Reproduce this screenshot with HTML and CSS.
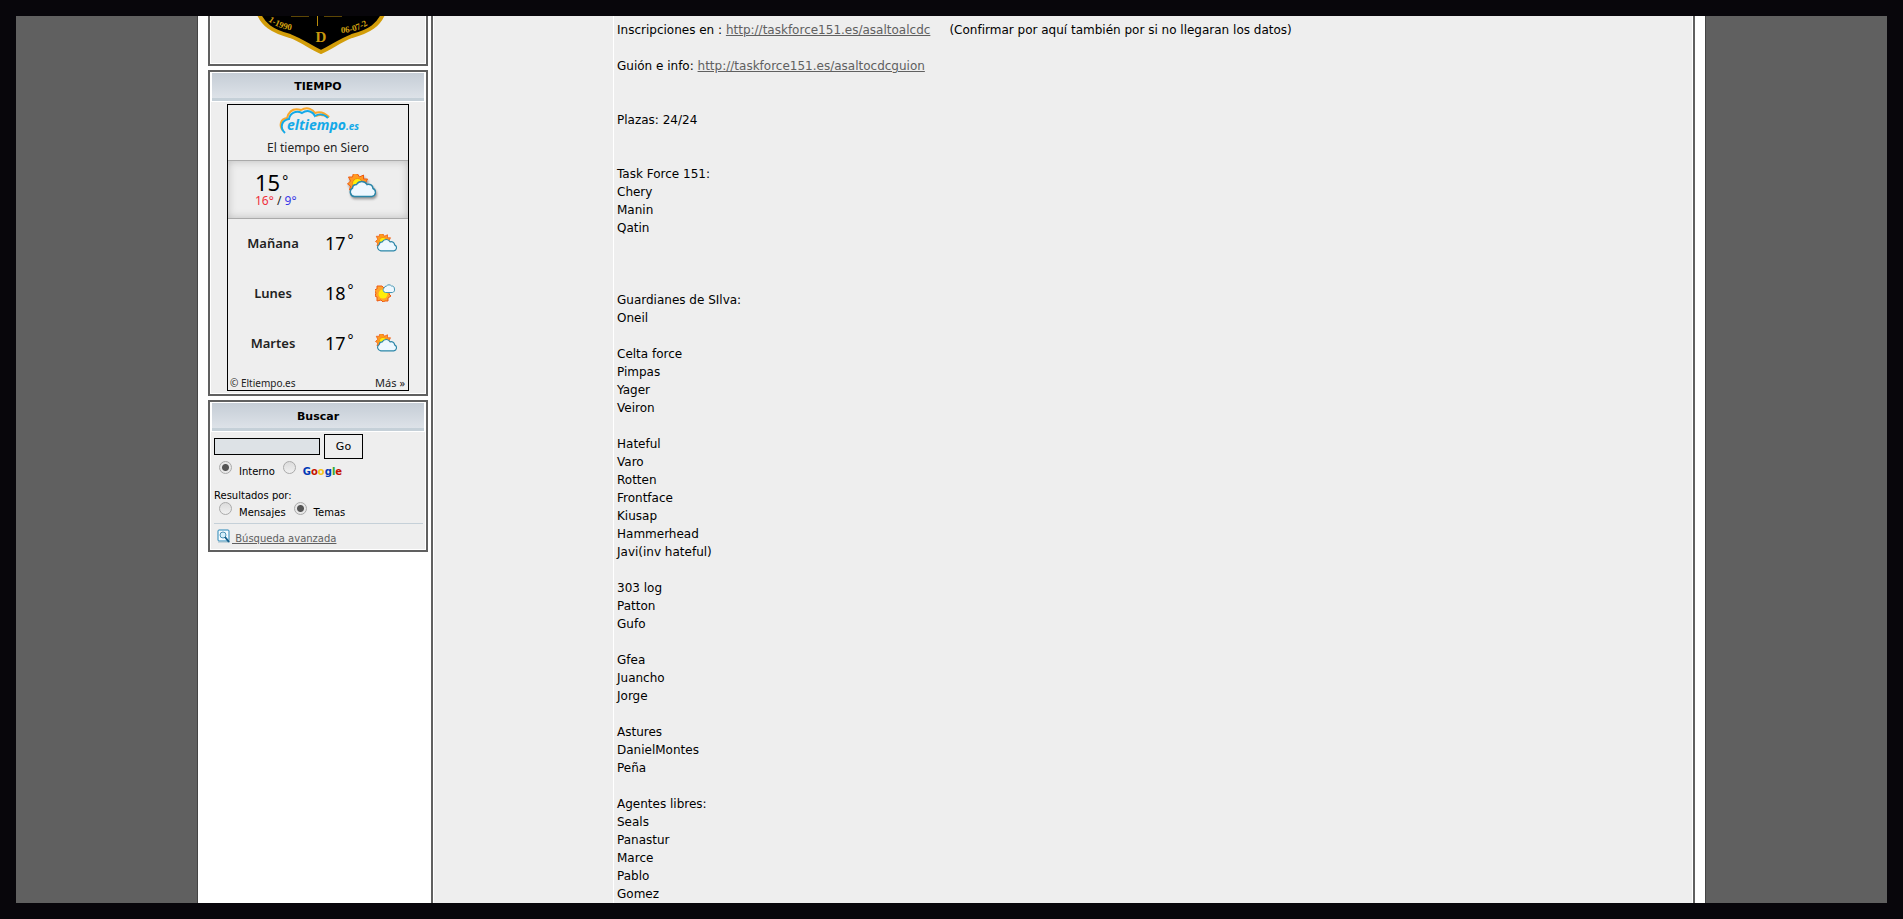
FILE: index.html
```html
<!DOCTYPE html>
<html lang="es">
<head>
<meta charset="utf-8">
<title>Asalto al CDC</title>
<link rel="stylesheet" href="styles.css">
</head>
<body>
<svg class="defs" aria-hidden="true">
  <symbol id="sun-cloud" viewBox="0 0 28 24">
    <path d="M10 0l2 3 4-2 0 4 4 0-2 4 2 4-9 4-3 2-2-3-4 0 1-4-3-2 3-3-2-4 4 0 1-4z" fill="#ff9a22" stroke="#ee5a12" stroke-width="1"/>
    <circle cx="10" cy="9.500" r="5" fill="#ffee08" stroke="#f08a10"/>
    <path d="M7 22.500a4.600 4.600 0 0 1-2-8.500 4 4 0 0 1 4-3.500 6 6 0 0 1 10.500 0 4.500 4.500 0 0 1 6 4 4.200 4.200 0 0 1-1 8z" fill="#eef8ff" stroke="#2b86a8" stroke-width="1.500"/>
  </symbol>
  <symbol id="sun-small-cloud" viewBox="0 0 20 18">
    <path d="M7 2l2 2 3-1 0 3 3 1-1 3 2 2-3 2 0 3-3 0-2 1-2-2-4 1 0-4-2-1 1-3-2-3 3-1 0-3 3 0z" fill="#ffa32c" stroke="#ee5a12" stroke-width="1"/>
    <circle cx="8" cy="10" r="4.500" fill="#ffee08"/>
    <path d="M10.500 8.500a2.600 2.600 0 0 1-1.500-4.500 3 3 0 0 1 2.500-2 3.200 3.200 0 0 1 5 0 2.600 2.600 0 0 1 2.900 3 2.600 2.600 0 0 1-2 3.500z" fill="#eef8ff" stroke="#4597b4"/>
  </symbol>
</svg>
<div class="frame">
  <div class="page">
    <aside class="sidebar">
      <section class="box box-badge">
        <svg class="badge" width="128" height="38" viewBox="0 0 128 38" role="img" aria-label="Escudo">
          <path d="M1 -4C6 9 15 15 33 20C46 25 53 31 64 36C75 31 82 25 95 20C113 15 122 9 127 -4Z" fill="#000" stroke="#d29d09" stroke-width="4"/>
          <path d="M34 0h18M67 0h18M60.500 0v10" stroke="#b98b0b" stroke-width="1" fill="none"/>
          <path id="arc-left" d="M11 5Q24 15 48 16" fill="none"/>
          <path id="arc-right" d="M84 17Q104 17 121 1" fill="none"/>
          <text class="badge-date"><textPath href="#arc-left">1-1990</textPath></text>
          <text class="badge-date"><textPath href="#arc-right">06-07-2</textPath></text>
          <text class="badge-letter" x="64" y="26" text-anchor="middle">D</text>
        </svg>
      </section>

      <section class="box">
        <h2 class="box-title">TIEMPO</h2>
        <div class="weather">
          <header class="weather-head">
            <svg width="78" height="28" viewBox="0 0 78 28" role="img" aria-label="eltiempo.es">
              <path d="M4 24C0 19 1 12 8 11C10 4 15 1 22 3C29 -1 34 3 36 6C41 4 46 6 50 10C45 8 41 7 37 9" fill="none" stroke="#f9a72b" stroke-width="2"/>
              <path d="M6 26C0 20 3 13 10 12C11 6 17 3 23 6C29 2 34 5 36 9C41 6 46 8 49 11" fill="none" stroke="#13a9e8" stroke-width="2"/>
              <text class="brand" x="8" y="23">eltiempo<tspan class="brand-tld">.es</tspan></text>
            </svg>
            <p class="weather-place">El tiempo en Siero</p>
          </header>
          <div class="weather-now">
            <div class="now-temps">
              <span class="now-temp">15<sup>°</sup></span>
              <span class="now-range"><span class="max">16°</span> / <span class="min">9°</span></span>
            </div>
            <svg class="now-icon" width="29" height="24"><use href="#sun-cloud"/></svg>
          </div>
          <ul class="forecast">
            <li><b>Mañana</b><span class="temp">17<sup>°</sup></span><svg width="22" height="18"><use href="#sun-cloud"/></svg></li>
            <li><b>Lunes</b><span class="temp">18<sup>°</sup></span><svg width="20" height="18"><use href="#sun-small-cloud"/></svg></li>
            <li><b>Martes</b><span class="temp">17<sup>°</sup></span><svg width="22" height="18"><use href="#sun-cloud"/></svg></li>
          </ul>
          <footer class="weather-foot"><span>© Eltiempo.es</span><a href="#">Más »</a></footer>
        </div>
      </section>

      <section class="box">
        <h2 class="box-title">Buscar</h2>
        <form class="search">
          <div class="search-row">
            <input class="search-text" type="text" aria-label="Buscar">
            <button class="search-go" type="button">Go</button>
          </div>
          <div class="options">
            <label><input type="radio" name="where" checked><span>Interno</span></label>
            <label><input type="radio" name="where"><span class="google"><i class="blue">G</i><i class="red">o</i><i class="yellow">o</i><i class="blue">g</i><i class="green">l</i><i class="red">e</i></span></label>
          </div>
          <p class="results">Resultados por:</p>
          <div class="options">
            <label><input type="radio" name="by"><span>Mensajes</span></label>
            <label><input type="radio" name="by" checked><span>Temas</span></label>
          </div>
          <div class="advanced">
            <svg width="13" height="14" viewBox="0 0 13 14" aria-hidden="true">
              <rect x="1" y="1" width="11" height="11" rx="1" fill="#f4fbff" stroke="#2787b8"/>
              <path d="M1 13h12V2" fill="none" stroke="#9dbccb"/>
              <circle cx="6" cy="6" r="3" fill="#d5effa" stroke="#4d92b4"/>
              <path d="M8 8l4 5" stroke="#145f8b" stroke-width="2"/>
            </svg>
            <a href="#">&nbsp;Búsqueda avanzada</a>
          </div>
        </form>
      </section>
    </aside>

    <main class="topic">
      <div class="author"></div>
      <article class="post">
        <p>Inscripciones en : <a href="#">http://taskforce151.es/asaltoalcdc</a> &nbsp; &nbsp; (Confirmar por aquí también por si no llegaran los datos)<br><br>
        Guión e info: <a href="#">http://taskforce151.es/asaltocdcguion</a><br><br><br>
        Plazas: 24/24<br><br><br>
        Task Force 151:<br>Chery<br>Manin<br>Qatin<br><br><br><br>
        Guardianes de SIlva:<br>Oneil<br><br>
        Celta force<br>Pimpas<br>Yager<br>Veiron<br><br>
        Hateful<br>Varo<br>Rotten<br>Frontface<br>Kiusap<br>Hammerhead<br>Javi(inv hateful)<br><br>
        303 log<br>Patton<br>Gufo<br><br>
        Gfea<br>Juancho<br>Jorge<br><br>
        Astures<br>DanielMontes<br>Peña<br><br>
        Agentes libres:<br>Seals<br>Panastur<br>Marce<br>Pablo<br>Gomez</p>
      </article>
    </main>
  </div>
</div>
</body>
</html>
```
FILE: styles.css
```css
* { box-sizing: border-box; }
body {
  margin: 0;
  background: #08060b;
  color: #000;
  font-family: "DejaVu Sans", Verdana, sans-serif;
  font-size: 10px;
}
h2, p, ul { margin: 0; padding: 0; }
.defs { display: none; }

.frame {
  height: 100vh;
  border: 16px solid #08060b;
  padding: 0 181px;
  background: #606060;
  overflow: hidden;
}
.page {
  display: flex;
  gap: 3px;
  min-height: 100%;
  padding: 0 10px;
  border: solid #444;
  border-width: 0 1px;
  background: #fff;
}

/* Sidebar */
.sidebar {
  display: flex;
  flex: none;
  flex-direction: column;
  gap: 4px;
  width: 220px;
}
.box {
  border: 2px solid #606060;
  padding: 1px;
  background: #eee;
  box-shadow: inset 0 0 0 1px #fff;
}
.box-badge {
  border-top: 0;
  padding: 0 1px 10px 6px;
  box-shadow: inset 1px -1px #fff, inset -1px 0 #fff;
}
.badge { display: block; margin: 0 auto; }
.badge-date { font: bold 9px "Liberation Serif", serif; fill: #d2a010; }
.badge-letter { font: bold 15px "Liberation Serif", serif; fill: #c9990e; }
.box-title {
  margin: 0 1px 1px;
  padding-top: 2px;
  border-bottom: 3px solid #c5d0d8;
  outline: 1px solid #fff;
  background: linear-gradient(#c5cdd6, #dde2e8);
  font-size: 11px;
  line-height: 23px;
  text-align: center;
}

/* Weather widget */
.weather {
  width: 182px;
  margin: 3px auto 2px;
  border: 1px solid #000;
  font-family: "Noto Sans", sans-serif;
  color: #222;
}
.weather-head { height: 55px; padding-top: 2px; text-align: center; }
.weather-head svg { display: block; margin: 0 auto; overflow: visible; }
.brand { font: italic bold 14px "Noto Sans", sans-serif; fill: #13a9e8; }
.brand-tld { font-size: 10px; }
.weather-place { font-size: 12px; line-height: 25px; }
.weather-now {
  display: flex;
  align-items: center;
  justify-content: space-between;
  height: 59px;
  padding: 0 32px 0 27px;
  border: solid #aaa;
  border-width: 1px 0;
  box-shadow: inset 0 0 8px #bbb;
}
.now-temps { display: flex; flex-direction: column; }
.now-temp { font-size: 22px; line-height: 22px; color: #000; }
sup { margin-left: 2px; font-size: 14px; line-height: 0; vertical-align: 5px; }
.now-range { font-size: 12px; line-height: 16px; }
.now-icon { margin-bottom: 8px; filter: drop-shadow(1px 2px 1px #999); }
.max { color: #f0303c; }
.min { color: #3838e8; }
.forecast { list-style: none; }
.forecast li {
  display: grid;
  grid-template-columns: 90px 57px 24px;
  align-items: center;
  height: 50px;
  padding-bottom: 2px;
}
.forecast b { font-size: 13px; font-weight: 600; text-align: center; }
.temp { padding-left: 7px; font-size: 18px; color: #000; }
.weather-foot {
  display: flex;
  align-items: center;
  justify-content: space-between;
  height: 21px;
  padding: 6px 3px 0 2px;
  font-size: 10px;
}
.weather-foot a { color: #222; font-size: 11px; text-decoration: none; }

/* Search box */
.search { padding: 2px 2px 0 3px; }
.search-row { display: flex; align-items: center; gap: 4px; }
.search-text {
  width: 106px;
  height: 17px;
  border: 1px solid #000;
  background: #dde2e6;
}
.search-go {
  width: 39px;
  height: 25px;
  padding: 0;
  border: 1px solid #000;
  background: #eee;
  color: #000;
  font: 11px "DejaVu Sans", Verdana, sans-serif;
}
.options { display: flex; gap: 8px; padding-left: 5px; }
.options label { display: flex; gap: 7px; line-height: 18px; }
.options span { padding-top: 4px; }
.options input {
  appearance: none;
  width: 13px;
  height: 13px;
  margin: 2px 0 0;
  border: 1px solid #aaa;
  border-radius: 50%;
  background: linear-gradient(#dcdcdc, #f0f0f0);
}
.options input:checked {
  background: radial-gradient(circle, #555 0 3px, #e8e8e8 4px);
}
.google { font-weight: bold; }
.google i { font-style: normal; }
.blue { color: #0039b6; }
.red { color: #c41200; }
.yellow { color: #f3c518; }
.green { color: #30a72f; }
.results { margin-top: 7px; line-height: 16px; }
.results + .options { margin-top: -4px; }
.advanced {
  display: flex;
  align-items: flex-start;
  gap: 2px;
  height: 26px;
  margin-top: 1px;
  padding: 5px 0 0 3px;
  border-top: 1px solid #c5d0d8;
}
.advanced a { line-height: 20px; }
a { color: #606060; }

/* Topic */
.topic {
  display: flex;
  flex: 1;
  border: solid #606060;
  border-width: 0 2px;
  background: #eee;
  box-shadow: inset 1px 0 #fff, inset -1px 0 #fff;
}
.author { flex: none; width: 181px; border-right: 1px solid #fff; }
.post {
  flex: 1;
  padding: 5px 3px;
  font-size: 12px;
  line-height: 18px;
}
```
